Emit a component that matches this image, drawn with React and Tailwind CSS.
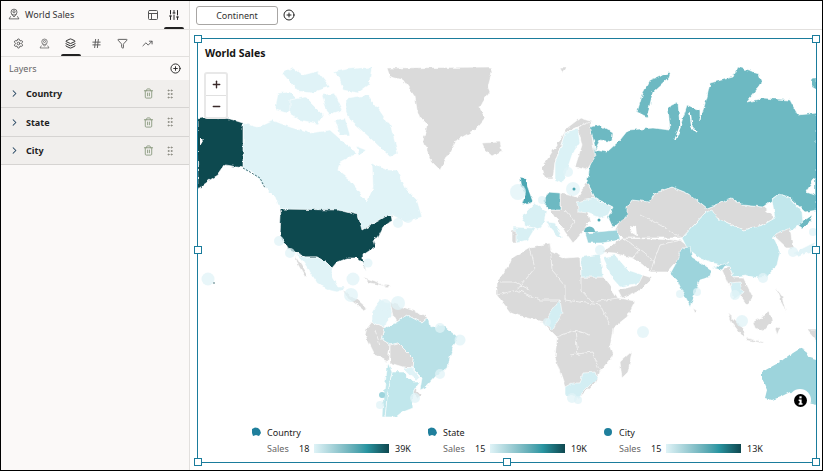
import React from 'react';
import { Settings, Layers, Hash, Filter, TrendingUp, SlidersVertical, PanelsTopLeft, Trash2, GripVertical, CirclePlus, ChevronRight, Plus, Minus } from 'lucide-react';

const GRAY = '#dadada';
const DARK = '#0f4850';
const TEAL = '#6db9c2';
const MID = '#9dd4dc';
const SOFT = '#c1e7ec';
const PALE = '#e0f3f7';

// shapes are in page pixels, the svg viewBox is offset to match
const SHAPES = [
  // north america
  [PALE, '243,123 257,127 272,120 290,127 310,133 330,130 347,145 357,153 340,162 338,170 350,180 367,202 373,187 372,163 387,170 397,170 407,190 417,200 422,217 405,222 392,215 380,220 362,230 358,215 347,212 280,209 275,197 265,187 253,173 243,168'],
  [PALE, '275,110 278,93 290,92 300,102 287,113'],
  [PALE, '290,100 305,97 323,115 318,124 300,120 290,114'],
  [PALE, '346,98 367,95 378,108 391,127 398,153 390,157 370,138 352,122 346,112'],
  [PALE, '333,72 347,69 372,67 369,85 358,93 343,90 339,77'],
  [PALE, '282,73 293,67 303,75 318,71 330,87 311,93 297,91 289,81'],
  [PALE, '322,95 335,93 343,110 328,115'],
  [PALE, '356,146 366,150 360,155'],
  [PALE, '335,120 345,118 350,135 340,135'],
  [GRAY, '387,68 490,67 492,72 488,87 490,92 483,102 480,108 485,118 475,130 457,140 447,157 440,170 432,162 423,140 427,125 420,118 417,110 415,97 403,80 390,77'],
  [GRAY, '482,143 500,142 502,150 492,156 485,150'],
  [DARK, '197,118 203,117 227,118 243,123 243,168 237,167 225,165 218,175 210,180 198,189'],
  [DARK, '280,209 338,210 350,213 358,215 362,230 380,220 388,215 392,215 393,220 383,227 378,237 373,240 375,247 363,255 363,265 367,271 362,262 357,258 347,258 337,262 332,268 327,263 317,257 305,257 295,252 287,248 280,235 281,215'],
  [PALE, '295,253 305,257 317,257 327,263 332,268 332,277 338,287 345,287 343,290 337,292 328,290 317,283 310,272 302,260'],
  [GRAY, '295,255 307,275 305,277 297,263'],
  [GRAY, '343,290 351,296 358,300 367,308 363,310 357,305 347,298'],
  [GRAY, '363,277 375,281 387,287 380,285 370,283'],
  [GRAY, '383,285 391,286 387,288'],
  // south america
  [PALE, '372,312 380,300 390,302 393,315 387,322 385,328 372,322'],
  [GRAY, '390,302 403,307 420,313 428,318 422,323 407,315 397,322 393,315'],
  [GRAY, '367,328 372,322 385,328 382,340 390,345 388,362 375,355 365,335'],
  ['#b9e1e7', '385,328 397,322 407,315 422,323 428,318 430,327 443,325 458,337 453,348 450,357 448,368 437,375 425,388 420,390 422,378 412,368 413,358 398,343 390,345 382,340'],
  [GRAY, '390,345 398,343 413,358 412,368 403,367 390,363'],
  [PALE, '403,367 412,368 420,378 417,381 407,372'],
  [SOFT, '392,372 403,372 413,382 420,382 413,392 412,398 413,408 403,412 397,417 385,417 387,397'],
  [SOFT, '388,363 392,372 387,397 385,417 382,417 383,397'],
  [GRAY, '415,388 422,395 418,399 413,393'],
  // africa and arabia
  [GRAY, '510,263 512,258 530,247 550,243 552,252 565,258 580,257 581,277 603,277 608,283 618,298 635,301 627,317 613,328 610,347 613,355 600,372 595,383 582,395 565,387 555,358 557,337 550,330 543,322 517,315 510,312 497,295 497,282'],
  ['#d2edf1', '581,257 600,254 603,277 581,277'],
  ['#d3eef3', '565,387 572,383 580,383 583,373 595,372 597,378 583,392 578,398 565,395'],
  ['#d3eef3', '560,300 562,312 553,330 545,323 550,313'],
  [GRAY, '632,351 628,372 622,378 620,362'],
  ['#d7f0f4', '603,257 615,255 628,270 643,275 640,283 620,287 612,278'],
  [GRAY, '623,238 680,240 690,248 673,265 667,272 650,272 643,265 633,258 628,257 615,253 602,252 620,240'],
  [GRAY, '618,290 638,285 643,275 652,278 640,290 622,298'],
  // russia and central asia
  [GRAY, '627,207 632,200 650,202 655,193 672,187 687,193 697,200 707,208 720,203 732,198 742,205 763,207 775,218 763,225 743,230 717,218 706,212 697,222 682,238 623,238 615,230'],
  [TEAL, '590,165 595,147 590,127 600,125 613,133 612,142 600,140 595,150 607,152 620,140 628,130 653,128 670,130 668,107 678,102 680,127 687,105 700,110 700,120 707,97 710,83 733,77 738,67 758,73 762,83 747,102 763,98 790,100 798,115 817,113 817,210 805,212 790,198 780,194 772,200 763,207 742,205 732,198 720,203 707,208 697,200 687,193 672,187 655,193 650,202 632,200 627,207 627,217 620,222 613,228 608,217 613,207 595,198 592,192 587,182'],
  [TEAL, '637,112 643,93 650,80 670,72 668,78 653,92 647,117'],
  [TEAL, '812,78 817,78 817,90 812,87'],
  [TEAL, '798,225 812,215 811,221 802,228'],
  ['#ffffff', '806,192 815,178 815,195'],
  [GRAY, '560,67 567,67 563,73'],
  [SOFT, '682,238 697,222 706,212 712,210 717,218 743,230 763,225 775,218 772,200 780,194 790,198 802,212 803,222 790,232 772,238 775,240 780,252 777,265 767,277 757,278 745,275 733,277 730,267 713,263 700,258 687,248'],
  [MID, '682,248 690,247 692,257 712,270 710,277 700,280 690,307 685,297 677,280 670,274 675,265'],
  [MID, '713,268 728,262 722,270'],
  [GRAY, '693,308 697,311 695,313'],
  [GRAY, '722,270 730,267 733,277 743,277 753,297 747,305 740,295 730,288'],
  ['#d3eef3', '730,283 740,282 743,293 733,300'],
  [GRAY, '727,313 745,330 743,337 732,323'],
  [GRAY, '747,338 763,342 762,343 746,340'],
  [GRAY, '753,322 770,312 772,322 763,332 755,328'],
  [GRAY, '775,327 780,328 777,335'],
  [GRAY, '776,288 782,296 786,312 780,300'],
  [GRAY, '807,330 817,330 817,342'],
  [GRAY, '773,235 790,228 793,248 787,248'],
  [PALE, '793,253 815,242 815,250 798,257'],
  // europe
  [GRAY, '542,167 560,140 567,128 580,118 593,122 578,127 565,133 555,163 553,178 545,178'],
  ['#dbf2f6', '555,163 565,133 578,128 580,143 572,155 567,170 563,183 555,180'],
  [GRAY, '578,127 590,122 595,157 587,170 575,167 582,145'],
  [GRAY, '560,193 577,197 587,182 592,192 595,198 578,205 587,210 590,222 583,232 573,243 565,232 560,223 555,218 550,210 560,210'],
  ['#4ca7b3', '520,177 525,178 527,185 533,202 525,205 522,204 525,195 522,188'],
  ['#6db9c2', '548,192 560,193 560,210 550,210 543,202'],
  ['#d8f0f4', '525,213 535,203 547,212 545,222 538,230 525,225 522,217'],
  ['#d8f0f4', '513,227 535,228 528,240 517,243 513,235'],
  [GRAY, '512,230 516,230 516,243 512,243'],
  ['#d8f0f4', '547,222 555,223 562,237 558,237 550,228'],
  ['#d8f0f4', '577,202 595,198 612,207 608,215 600,218 587,213 578,212'],
  [MID, '585,233 618,230 620,240 602,243 588,243'],
];

// translucent circles for small countries
const DOTS = [
  [208, 279, 6.5], [353, 279, 6.5], [351, 295, 7], [279, 241, 5], [290, 253, 5], [368, 263, 4.5],
  [398, 303, 7], [385, 305, 6], [440, 328, 5], [460, 340, 5.5], [398, 223, 5], [408, 218, 5],
  [415, 398, 5], [380, 405, 4], [440, 374, 5], [547, 322, 4], [643, 332, 6], [568, 172, 5],
  [573, 189, 7], [518, 192, 8], [542, 200, 4], [600, 250, 5], [793, 252, 5], [813, 232, 4],
  [763, 278, 5], [742, 321, 6], [572, 398, 5], [578, 400, 4], [735, 295, 5], [680, 294, 4], [697, 292, 4],
];

const LINES = [
  '530,247 535,268 517,290', '550,243 552,270 565,285 565,300', '581,277 581,290 592,302 618,298',
  '497,295 517,290 540,300 560,300', '565,300 600,305 610,325', '557,337 575,330 590,335', '570,355 592,352 600,372',
  '623,238 640,250 655,262', '680,240 660,245 650,272', '640,215 660,225 682,238', '565,210 575,222 567,232',
  '500,282 515,282 530,290', '575,330 578,355', '640,250 633,258', '380,345 375,330',
];

const WorldMap = () => (
  <svg viewBox="198 67 618 350" className="block h-[350px] w-[618px]">
    <defs>
      {/* roughens the straight polygon edges into coastlines */}
      <filter id="coast" x="-5%" y="-5%" width="110%" height="110%">
        <feTurbulence type="fractalNoise" baseFrequency="0.18" numOctaves="2" seed="4" />
        <feDisplacementMap in="SourceGraphic" scale="4" xChannelSelector="R" yChannelSelector="G" />
      </filter>
    </defs>
    <g filter="url(#coast)">
      {SHAPES.map(([fill, points], i) => (
        <polygon key={i} points={points} fill={fill} stroke="#ffffff" strokeWidth="0.6" />
      ))}
      {LINES.map((points, i) => (
        <polyline key={i} points={points} fill="none" stroke="#ffffff" strokeWidth="0.6" />
      ))}
      <path d="M587 222l20 0 5 6-22 3z" fill="#ffffff" />
      <path d="M630 225l6 2 1 9-5-3z" fill="#ffffff" />
      <path d="M680 107l0 20-5 13M690 112l2 15 5 5" fill="none" stroke="#ffffff" strokeWidth="1.5" />
      <path d="M200 137l3 3-3 5z" fill="#ffffff" />
      <polygon points="762,372 780,362 792,353 800,348 805,350 810,358 817,360 817,405 808,403 805,395 790,392 780,397 772,400 765,398 767,390 762,378" fill={MID} />
    </g>
    {DOTS.map(([cx, cy, r], i) => (
      <circle key={i} cx={cx} cy={cy} r={r} fill="#e0f3f7" fillOpacity="0.75" />
    ))}
    <path d="M243 168l7 4 10 6 5 10" fill="none" stroke={DARK} strokeWidth="0.8" strokeDasharray="2 1.500" />
    <circle cx="214" cy="283" r="0.7" fill={DARK} />
    <circle cx="382" cy="395" r="3" fill={MID} />
    <circle cx="574" cy="189" r="1.500" fill="#4ca7b3" />
    <circle cx="599" cy="220" r="1.500" fill="#4ca7b3" />
    <path d="M584 232a5.500 5.500 0 0 1 11 0z" fill={TEAL} />
  </svg>
);

const PinPerson = ({ className }) => (
  <svg viewBox="0 0 16 16" fill="none" stroke="currentColor" strokeWidth="1" className={className}>
    <circle cx="8" cy="5.500" r="4" />
    <circle cx="8" cy="5" r="1.500" />
    <path d="M5 8.500L8 12l3-3.500M3.500 11L1.500 14.500h13L12.500 11" />
  </svg>
);

const Info = () => (
  <svg viewBox="0 0 14 14" className="h-[13px] w-[13px]">
    <circle cx="7" cy="7" r="7" fill="#000000" />
    <rect x="5.800" y="2.500" width="2.400" height="2.200" fill="#ffffff" />
    <path d="M5 6h3.200v4H9.200v1.500H5V10h1V7.500H5z" fill="#ffffff" />
  </svg>
);

const Blob = ({ size = 'country' }) => (
  size === 'city' ? (
    <span className="ml-[1px] mr-[7px] h-[8px] w-[8px] rounded-full bg-[#1f7f9c]" />
  ) : (
    <svg viewBox="0 0 10 10" className="mr-[6px] h-[10px] w-[10px] text-[#1f7f9c]">
      <path d="M1 2l3-1.500L7 1l2 2 1 3-2 3-3-1-3 1-1-3z" fill="currentColor" />
    </svg>
  )
);

const LegendGroup = ({ name, kind, low, high }) => (
  <div className="w-[176px]">
    <div className="flex h-[14px] items-center text-[#222]">
      <Blob size={kind} />
      <span>{name}</span>
    </div>
    <div className="mt-[2px] flex h-[14px] items-center pl-[16px]">
      <span className="w-[32px] text-[#666]">Sales</span>
      <span className="w-[15px] text-[#222]">{low}</span>
      <span className="h-[9px] w-[75px] bg-gradient-to-r from-[#dff3f7] via-[#2a96a2] via-70% to-[#0f4850]" />
      <span className="ml-[6px] text-[#222]">{high}</span>
    </div>
  </div>
);

const Handle = ({ className }) => (
  <span className={`absolute h-[8px] w-[8px] border border-[#1a7c9c] bg-white ${className}`} />
);

const LayerRow = ({ name, height }) => (
  <div className={`flex items-center border-b border-[#d6d4d2] bg-[#f1efed] pl-[8px] pr-[13px] ${height}`}>
    <ChevronRight size={11} strokeWidth={2.2} className="text-[#1d3f5c]" />
    <span className="ml-[6px] flex-1 font-bold text-[#222]">{name}</span>
    <Trash2 size={11} className="text-[#8b9a80]" />
    <GripVertical size={12} className="ml-[10px] text-[#8a8a80]" />
  </div>
);

const TABS = [Settings, PinPerson, Layers, Hash, Filter, TrendingUp];

export default function App() {
  return (
    <div className="flex h-[471px] w-[823px] overflow-hidden border border-black bg-white text-[9px] leading-none [font-family:'Noto_Sans',sans-serif]">
      {/* left panel */}
      <aside className="h-full w-[189px] shrink-0 border-r border-[#e2e0de] bg-[#fbf9f8]">
        <div className="flex h-[29px] items-center border-b border-[#e2e0de] pl-[7px]">
          <PinPerson className="mb-[2px] h-[12px] w-[12px] text-[#444]" />
          <span className="mb-[2px] ml-[5px] flex-1 text-[#333]">World Sales</span>
          <PanelsTopLeft size={12} className="text-[#555]" />
          <div className="relative ml-[5px] mr-[5px] flex h-full w-[20px] items-center justify-center">
            <SlidersVertical size={12} className="text-[#222]" />
            <span className="absolute bottom-0 left-0 h-[2px] w-[20px] rounded-t bg-[#222]" />
          </div>
        </div>
        <div className="flex h-[27px] items-center border-b border-[#e2e0de] pl-[5px]">
          {TABS.map((Icon, i) => (
            <div key={i} className="relative flex h-full w-[25.800px] items-center justify-center">
              <Icon className={`h-[11px] w-[11px] ${i === 2 ? 'text-[#222]' : 'text-[#555]'}`} />
              {i === 2 && <span className="absolute bottom-0 left-[3px] h-[2px] w-[20px] rounded-t bg-[#222]" />}
            </div>
          ))}
        </div>
        <div className="flex h-[23px] items-center justify-between pl-[8px] pr-[8px] text-[#666]">
          <span>Layers</span>
          <CirclePlus size={11} className="text-[#222]" />
        </div>
        <LayerRow name="Country" height="h-[28px]" />
        <LayerRow name="State" height="h-[29px]" />
        <LayerRow name="City" height="h-[28px]" />
      </aside>

      {/* canvas */}
      <main className="min-w-0 flex-1">
        <div className="flex h-[29px] items-center border-b border-[#e2e0de] pl-[6px]">
          <div className="flex h-[19px] w-[82px] items-center justify-center rounded-[3px] border border-[#a8a6a4] text-[#333]">Continent</div>
          <CirclePlus size={12} className="ml-[5px] text-[#222]" />
        </div>
        <div className="relative ml-[7px] mt-[8px] h-[425px] w-[620px] border border-[#1a7c9c]">
          <Handle className="-left-[4px] -top-[4px]" />
          <Handle className="-right-[4px] -top-[4px]" />
          <Handle className="-left-[4px] top-[207px]" />
          <Handle className="-right-[4px] top-[207px]" />
          <Handle className="-bottom-[4px] -left-[4px]" />
          <Handle className="-bottom-[4px] left-[305px]" />
          <Handle className="-bottom-[4px] -right-[4px]" />

          <h1 className="flex h-[28px] items-center pl-[7px] text-[10.500px] font-bold text-[#161513]">World Sales</h1>
          <WorldMap />
          <div className="mt-[8px] flex pl-[53px] text-[9px]">
            <LegendGroup name="Country" kind="country" low="18" high="39K" />
            <LegendGroup name="State" kind="state" low="15" high="19K" />
            <LegendGroup name="City" kind="city" low="15" high="13K" />
          </div>

          {/* zoom control lies over the map */}
          <div className="absolute left-[6px] top-[33px] flex h-[47px] w-[24px] flex-col rounded-[3px] border-2 border-[#e8e8e8] bg-white">
            <div className="flex flex-1 items-center justify-center border-b border-[#e0e0e0]">
              <Plus size={11} strokeWidth={3} className="text-[#3a2a2a]" />
            </div>
            <div className="flex flex-1 items-center justify-center">
              <Minus size={11} strokeWidth={3} className="text-[#3a2a2a]" />
            </div>
          </div>
          <div className="absolute left-[591px] top-[350px] flex h-[22px] w-[22px] items-center justify-center rounded-full bg-white">
            <Info />
          </div>
        </div>
      </main>
    </div>
  );
}
